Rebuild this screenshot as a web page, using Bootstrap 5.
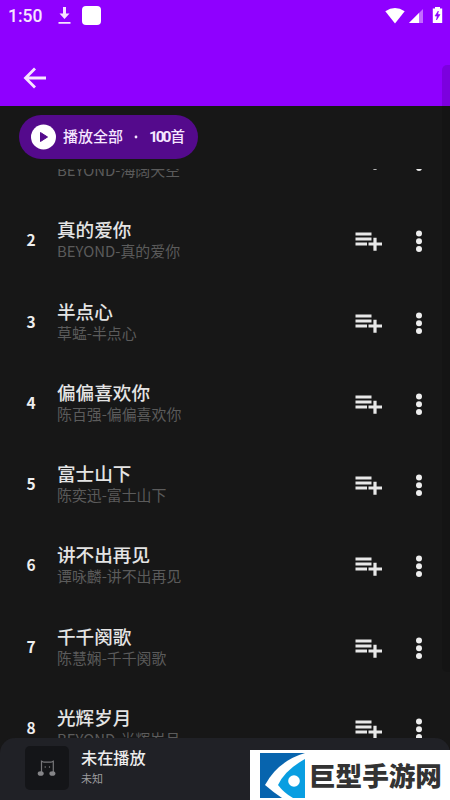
<!DOCTYPE html>
<html lang="zh-CN">
<head>
<meta charset="utf-8">
<meta name="viewport" content="width=device-width, initial-scale=1">
<title>播放列表</title>
<link href="https://cdn.jsdelivr.net/npm/bootstrap@5.3.0/dist/css/bootstrap.min.css" rel="stylesheet">
<style>
body{font-family:"Noto Sans CJK SC",sans-serif;background:#171717;color:#ececec}
.phone{width:450px;height:800px;background:#171717}
.app-header{height:106px;background:#8f00ff}
.status{height:32px;padding:0 7px 0 8px}
.clock{font:500 17.5px/32px Roboto,sans-serif;color:#f6e4ff;width:50px}
.app-tile{width:19px;height:19px;border-radius:4px;background:#fff;margin:-2px 0 0 11px}
.back{margin:30px 0 0 19px;width:32px;height:32px}
.play-zone{height:63px;padding:9px 0 0 19px}
.play-all{width:179px;height:44px;background:#540a8c;color:#f5e6ff;font-size:15px;line-height:42px;font-weight:500;padding-left:12px}
.all-label{margin-left:6px}
.count{font-size:14.5px;margin-left:-1px}
.count span{font-family:Roboto,sans-serif;font-weight:700;font-size:15.5px;letter-spacing:-2.2px;margin-right:1.5px}
.all-label,.count{height:44px}
.songs{height:569px}
.song{height:81.25px;flex:none;padding-left:19px}
.song:first-child{margin-top:-49.5px}
.num{width:24px;font:700 15.5px/20px "Noto Sans CJK SC",sans-serif;text-align:center;color:#eee;padding-bottom:4px}
.info{margin-left:14px;width:298px;padding-bottom:2px}
.song-title{font-size:18.6px;line-height:22px;font-weight:500;color:#e4e4e4;margin-top:-1px}
.artist{font-size:14.9px;line-height:21px;color:#5b5b5b}
.song-more{margin-left:31.5px}
.player{height:62px;background:#202126;border-radius:15px 15px 0 0;padding:8px 0 0 25px}
.cover{width:44px;height:44px;background:#141518;border-radius:5px}
.now{font-size:16.2px;line-height:23px;font-weight:500;color:#eee}
.unknown{font-size:11px;line-height:18px;color:#9a9a9d}
.edge{left:442px;top:65px;width:12px;height:607px;border-radius:5px;background:rgba(0,0,0,.13)}
.brand{left:250px;top:750px;width:200px;height:50px;background:#fff;padding-left:10px}
.brand-name{font-size:26.6px;line-height:50px;font-weight:900;color:#333;margin-left:4px}
</style>
<script src="https://cdn.jsdelivr.net/npm/bootstrap@5.3.0/dist/js/bootstrap.bundle.min.js"></script>
</head>
<body class="m-0 overflow-hidden">
<svg class="d-none">
<symbol id="add" viewBox="0 0 28 24"><path d="M.5 5h16M.5 10h16M.5 15h11.500" stroke="#e8e8e8" stroke-width="2.900"/><path d="M13.500 15h13.500M20 8.800v13" stroke="#e8e8e8" stroke-width="3.200"/></symbol>
<symbol id="dots" viewBox="0 0 8 24"><g fill="#eee"><circle cx="4" cy="4.400" r="3"/><circle cx="4" cy="12.200" r="3"/><circle cx="4" cy="20" r="3"/></g></symbol>
</svg>
<main class="phone d-flex flex-column position-relative overflow-hidden">
<header class="app-header">
<div class="status d-flex align-items-center">
<span class="clock">1:50</span>
<svg width="13" height="18" viewBox="0 0 13 18"><path d="M5 0h3v6.500h3.500L6.500 12 1.500 6.500H5zM.5 15h12v1.800H.5z" fill="#f6e4ff"/></svg>
<span class="app-tile"></span>
<svg class="ms-auto" width="20" height="17" viewBox="0 0 20 17"><path d="M.3 3.200Q10-3 19.700 3.200L10 15.500z" fill="#fff"/></svg>
<svg class="ms-1" width="15" height="15" viewBox="0 0 15 15"><path d="M0 14 14 0v14z" fill="#c36bff"/><path d="M0 14 10 4v10z" fill="#fff"/></svg>
<svg class="ms-2" width="11" height="18" viewBox="0 0 11 18"><path d="M3 0h5v1.500h2.200V16H.8V1.500H3z" fill="#fff"/><path d="M6.300 4 3 9h2.200L4.500 13 8 7.600H5.800z" fill="#8f00ff" stroke="#8f00ff" stroke-width=".6"/></svg>
</div>
<svg class="back d-block" viewBox="0 0 32 32"><path d="M27 16H7M16 6.500 6.500 16 16 25.500" fill="none" stroke="#f7e5ff" stroke-width="2.800"/></svg>
</header>
<section class="play-zone">
<div class="play-all rounded-pill d-flex align-items-center text-nowrap">
<svg width="26" height="26" viewBox="0 0 26 26"><circle cx="12.500" cy="13" r="12.500" fill="#fff"/><path d="M9.500 8.500v9l7-4.500z" fill="#540a8c" stroke="#540a8c" stroke-linejoin="round"/></svg>
<span class="all-label">播放全部</span><svg class="mx-2" width="11" height="6"><circle cx="5" cy="3" r="1.400" fill="#f5e6ff"/></svg><span class="count"><span>100</span>首</span>
</div>
</section>
<section class="songs d-flex flex-column overflow-hidden" id="songs"></section>
<footer class="player d-flex">
<div class="cover d-flex align-items-center justify-content-center"><svg width="20" height="20" viewBox="0 0 20 20"><path d="M4.500 14.500V3.200l2.500 1h7l2.300-1v11.500" fill="none" stroke="#77777a" stroke-width="1.200"/><g fill="#858588"><ellipse cx="3.700" cy="15.500" rx="3" ry="2.300"/><ellipse cx="15.400" cy="15.500" rx="3" ry="2.300"/><circle cx="8.200" cy="9" r=".7"/><circle cx="12.500" cy="9" r=".7"/></g></svg></div>
<div class="ms-2 ps-1"><div class="now">未在播放</div><div class="unknown">未知</div></div>
</footer>
<div class="edge position-absolute"></div>
<div class="brand position-absolute d-flex align-items-center text-nowrap">
<svg width="45" height="45" viewBox="0 0 45 45"><path d="M0 0h45v45H0z" fill="#0764ae"/><path d="M45 0v45H22Q13 39 5 32 18 8 45 0z" fill="#fff"/><path d="M45 6v39H33Q24 40 18 32 25 17 45 6z" fill="#099ee1"/><circle cx="34" cy="28" r="5.800" fill="#fff"/></svg>
<span class="brand-name">巨型手游网</span>
</div>
</main>
<script>
const songs=[["海阔天空","BEYOND"],["真的爱你","BEYOND"],["半点心","草蜢"],["偏偏喜欢你","陈百强"],["富士山下","陈奕迅"],["讲不出再见","谭咏麟"],["千千阕歌","陈慧娴"],["光辉岁月","BEYOND"]];
document.getElementById("songs").innerHTML=songs.map(([t,a],i)=>`<article class="song d-flex align-items-center"><span class="num">${i+1}</span><div class="info"><div class="song-title">${t}</div><div class="artist">${a}-${t}</div></div><svg width="28" height="24"><use href="#add"/></svg><svg class="song-more" width="8" height="24"><use href="#dots"/></svg></article>`).join("");
</script>
</body>
</html>
